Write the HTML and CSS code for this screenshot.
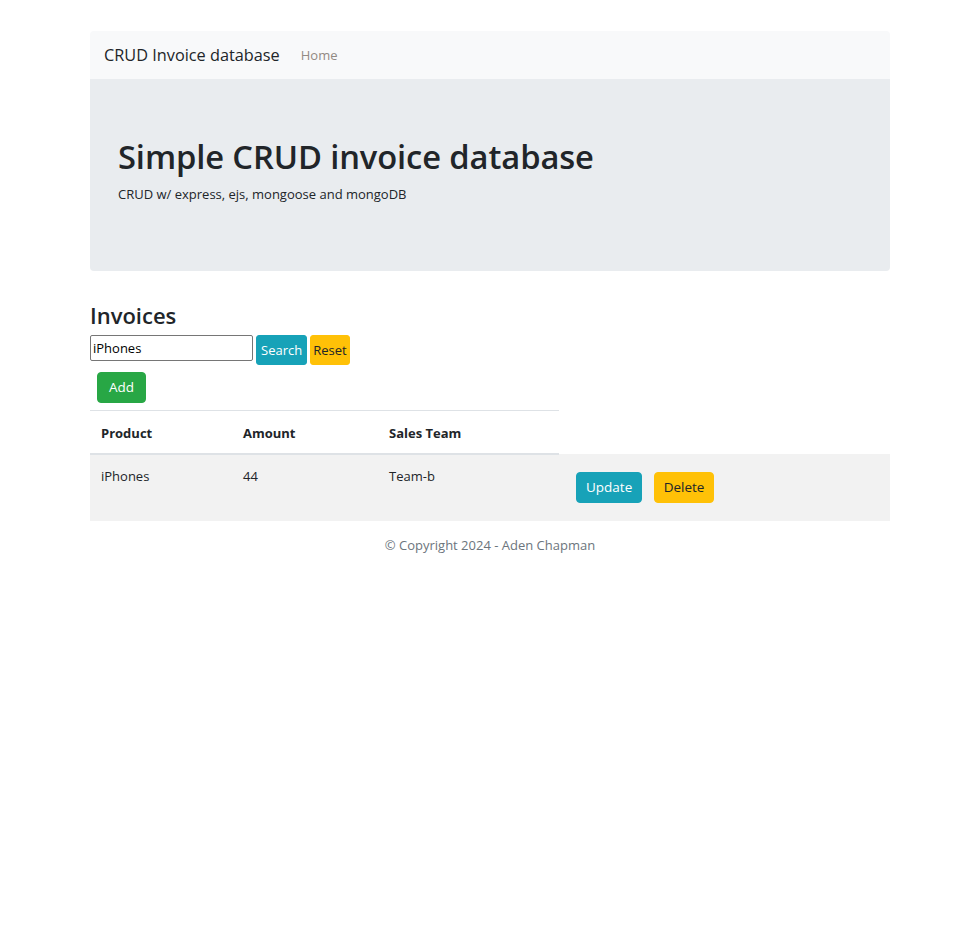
FILE: index.html
```html
<!DOCTYPE html>
<html lang="en">
<head>
<meta charset="utf-8">
<title>CRUD Invoice database</title>
<link rel="stylesheet" href="styles.css">
</head>
<body>
<div class="container">
  <nav class="navbar">
    <span class="brand">CRUD Invoice database</span>
    <a class="nav-link" href="#">Home</a>
  </nav>
  <header class="jumbotron">
    <h1>Simple CRUD invoice database</h1>
    <p>CRUD w/ express, ejs, mongoose and mongoDB</p>
  </header>
  <main>
    <h2>Invoices</h2>
    <form class="search">
      <input type="text" value="iPhones">
      <button type="button" class="btn btn-info btn-sm">Search</button>
      <button type="button" class="btn btn-warning btn-sm btn-reset">Reset</button>
    </form>
    <div class="add-wrap"><button type="button" class="btn btn-success">Add</button></div>
    <table class="table">
      <thead>
        <tr><th class="c1">Product</th><th class="c2">Amount</th><th class="c3">Sales Team</th></tr>
      </thead>
      <tbody>
        <tr>
          <td>iPhones</td>
          <td>44</td>
          <td>Team-b</td>
          <td class="actions">
            <button type="button" class="btn btn-info">Update</button>
            <button type="button" class="btn btn-warning">Delete</button>
          </td>
        </tr>
      </tbody>
    </table>
  </main>
  <footer class="footer">© Copyright 2024 - Aden Chapman</footer>
</div>
</body>
</html>
```
FILE: styles.css
```css
html, body {
  margin: 0;
  padding: 0;
  background: #fff;
}
body {
  font-family: "Open Sans", "Noto Sans", sans-serif;
  color: #212529;
  font-size: 14px;
}
.container {
  width: 800px;
  margin: 31px 0 0 90px;
}
.navbar {
  display: flex;
  align-items: center;
  height: 48px;
  padding: 0 14px;
  background: #f8f9fa;
  border-radius: 4px 4px 0 0;
}
.brand {
  font-size: 16.3px;
  color: #212529;
  margin-right: 21px;
}
.nav-link {
  font-size: 13px;
  color: #928a83;
  text-decoration: none;
}
.jumbotron {
  background: #e9ecef;
  border-radius: 0 0 4px 4px;
  padding: 56px 28px 68px;
  height: 192px;
  box-sizing: border-box;
}
.jumbotron h1 {
  margin: 0;
  font-size: 32.7px;
  font-weight: 600;
  line-height: 44px;
  letter-spacing: -0.1px;
}
.jumbotron p {
  margin: 5px 0 0;
  font-size: 13px;
  line-height: 20px;
}
main h2 {
  margin: 29px 0 0;
  font-size: 22px;
  font-weight: 600;
  line-height: 30px;
}
.search {
  display: flex;
  align-items: flex-start;
  gap: 3px;
  margin-top: 5px;
}
.search input {
  width: 163px;
  height: 26px;
  box-sizing: border-box;
  border: 1px solid #767676;
  border-radius: 2px;
  padding: 0 2px;
  font: 13px "Open Sans", sans-serif;
  color: #000;
}
.btn {
  font-family: "Open Sans", sans-serif;
  border: 1px solid transparent;
  border-radius: 4px;
  font-size: 13.5px;
  line-height: 19px;
  padding: 5px 9px;
  cursor: pointer;
}
.btn-sm {
  font-size: 13px;
  padding: 4px 4px;
  border-radius: 3px;
  line-height: 20px;
}
.btn-sm.btn-reset {
  padding: 4px 2px;
}
.btn-info { background: #17a2b8; border-color: #17a2b8; color: #fff; }
.btn-warning { background: #ffc107; border-color: #ffc107; color: #212529; }
.btn-success { background: #28a745; border-color: #28a745; color: #fff; padding: 5px 11px; }
.add-wrap {
  padding: 7px 7px 7px;
}
.table {
  width: 100%;
  border-collapse: collapse;
}
.table th {
  text-align: left;
  font-weight: 700;
  font-size: 13px;
  padding: 12px 11px 10px;
  line-height: 20px;
  border-top: 1px solid #dee2e6;
  border-bottom: 2px solid #dee2e6;
}
.table th.c1 { width: 120px; }
.table th.c2 { width: 124px; }
.table th.c3 { width: 159px; }
.table td {
  vertical-align: top;
  padding: 11px 11px 13px;
  line-height: 20px;
  font-size: 13px;
  background: #f2f2f2;
}
.table td.actions {
  padding: 18px 11px 18px 17px;
}
.actions .btn + .btn { margin-left: 8px; }
.footer {
  text-align: center;
  color: #6c757d;
  font-size: 13px;
  padding-top: 15px;
}
```
